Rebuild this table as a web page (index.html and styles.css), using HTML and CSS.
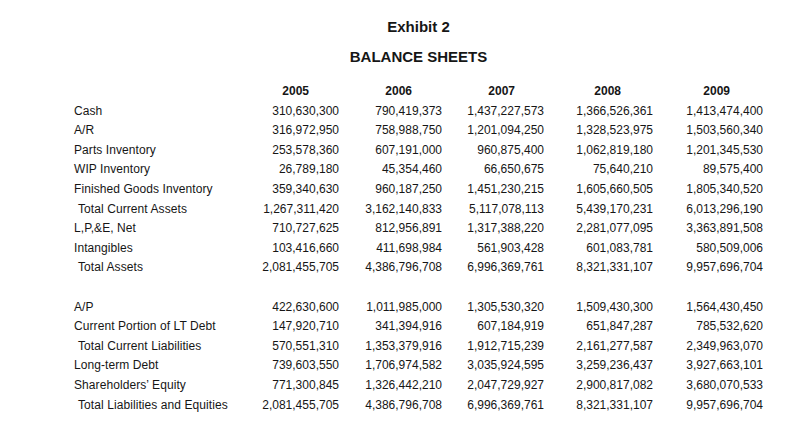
FILE: index.html
```html
<!DOCTYPE html>
<html>
<head>
<meta charset="utf-8">
<link rel="stylesheet" href="styles.css">
</head>
<body>
<div class="page">
  <div class="title">Exhibit 2</div>
  <div class="subtitle">BALANCE SHEETS</div>
  <table class="sheet">
    <colgroup>
      <col class="c-label"><col class="c1"><col class="c2"><col class="c3"><col class="c4"><col class="c5">
    </colgroup>
    <thead>
      <tr class="years">
        <th></th><th class="y1">2005</th><th class="y2">2006</th><th class="y3">2007</th><th class="y4">2008</th><th class="y5">2009</th>
      </tr>
    </thead>
    <tbody>
      <tr><td>Cash</td><td>310,630,300</td><td>790,419,373</td><td>1,437,227,573</td><td>1,366,526,361</td><td>1,413,474,400</td></tr>
      <tr><td>A/R</td><td>316,972,950</td><td>758,988,750</td><td>1,201,094,250</td><td>1,328,523,975</td><td>1,503,560,340</td></tr>
      <tr><td>Parts Inventory</td><td>253,578,360</td><td>607,191,000</td><td>960,875,400</td><td>1,062,819,180</td><td>1,201,345,530</td></tr>
      <tr><td>WIP Inventory</td><td>26,789,180</td><td>45,354,460</td><td>66,650,675</td><td>75,640,210</td><td>89,575,400</td></tr>
      <tr><td>Finished Goods Inventory</td><td>359,340,630</td><td>960,187,250</td><td>1,451,230,215</td><td>1,605,660,505</td><td>1,805,340,520</td></tr>
      <tr><td class="indent">Total Current Assets</td><td>1,267,311,420</td><td>3,162,140,833</td><td>5,117,078,113</td><td>5,439,170,231</td><td>6,013,296,190</td></tr>
      <tr><td>L,P,&amp;E, Net</td><td>710,727,625</td><td>812,956,891</td><td>1,317,388,220</td><td>2,281,077,095</td><td>3,363,891,508</td></tr>
      <tr><td>Intangibles</td><td>103,416,660</td><td>411,698,984</td><td>561,903,428</td><td>601,083,781</td><td>580,509,006</td></tr>
      <tr><td class="indent">Total Assets</td><td>2,081,455,705</td><td>4,386,796,708</td><td>6,996,369,761</td><td>8,321,331,107</td><td>9,957,696,704</td></tr>
      <tr class="blank"><td></td><td></td><td></td><td></td><td></td><td></td></tr>
      <tr><td>A/P</td><td>422,630,600</td><td>1,011,985,000</td><td>1,305,530,320</td><td>1,509,430,300</td><td>1,564,430,450</td></tr>
      <tr><td>Current Portion of LT Debt</td><td>147,920,710</td><td>341,394,916</td><td>607,184,919</td><td>651,847,287</td><td>785,532,620</td></tr>
      <tr><td class="indent">Total Current Liabilities</td><td>570,551,310</td><td>1,353,379,916</td><td>1,912,715,239</td><td>2,161,277,587</td><td>2,349,963,070</td></tr>
      <tr><td>Long-term Debt</td><td>739,603,550</td><td>1,706,974,582</td><td>3,035,924,595</td><td>3,259,236,437</td><td>3,927,663,101</td></tr>
      <tr><td>Shareholders’ Equity</td><td>771,300,845</td><td>1,326,442,210</td><td>2,047,729,927</td><td>2,900,817,082</td><td>3,680,070,533</td></tr>
      <tr><td class="indent">Total Liabilities and Equities</td><td>2,081,455,705</td><td>4,386,796,708</td><td>6,996,369,761</td><td>8,321,331,107</td><td>9,957,696,704</td></tr>
    </tbody>
  </table>
</div>
</body>
</html>
```
FILE: styles.css
```css
html, body {
  margin: 0;
  padding: 0;
  background: #ffffff;
}
body {
  font-family: "Liberation Sans", Arial, sans-serif;
  color: #161616;
}
.page {
  margin-left: 74px;
  width: 689px;
}
.title {
  margin-top: 17px;
  font-size: 15px;
  font-weight: bold;
  line-height: 20px;
  text-align: center;
}
.subtitle {
  margin-top: 9.5px;
  font-size: 15px;
  font-weight: bold;
  line-height: 20px;
  text-align: center;
}
.sheet {
  margin-top: 15.5px;
  border-collapse: collapse;
  table-layout: fixed;
  width: 689px;
  font-size: 12px;
}
.c-label { width: 160px; }
.c1 { width: 105px; }
.c2 { width: 103px; }
.c3 { width: 102px; }
.c4 { width: 109px; }
.c5 { width: 110px; }
.sheet th, .sheet td {
  padding: 0;
  height: 19.6px;
  line-height: 19.6px;
  white-space: nowrap;
  text-align: right;
  font-weight: normal;
}
.sheet td:first-child {
  text-align: left;
  letter-spacing: 0.08px;
}
.sheet td.indent {
  padding-left: 4px;
}
.years th {
  font-weight: bold;
}
.years .y1 { padding-right: 30px; }
.years .y2 { padding-right: 30px; }
.years .y3 { padding-right: 29px; }
.years .y4 { padding-right: 32px; }
.years .y5 { padding-right: 33px; }
```
